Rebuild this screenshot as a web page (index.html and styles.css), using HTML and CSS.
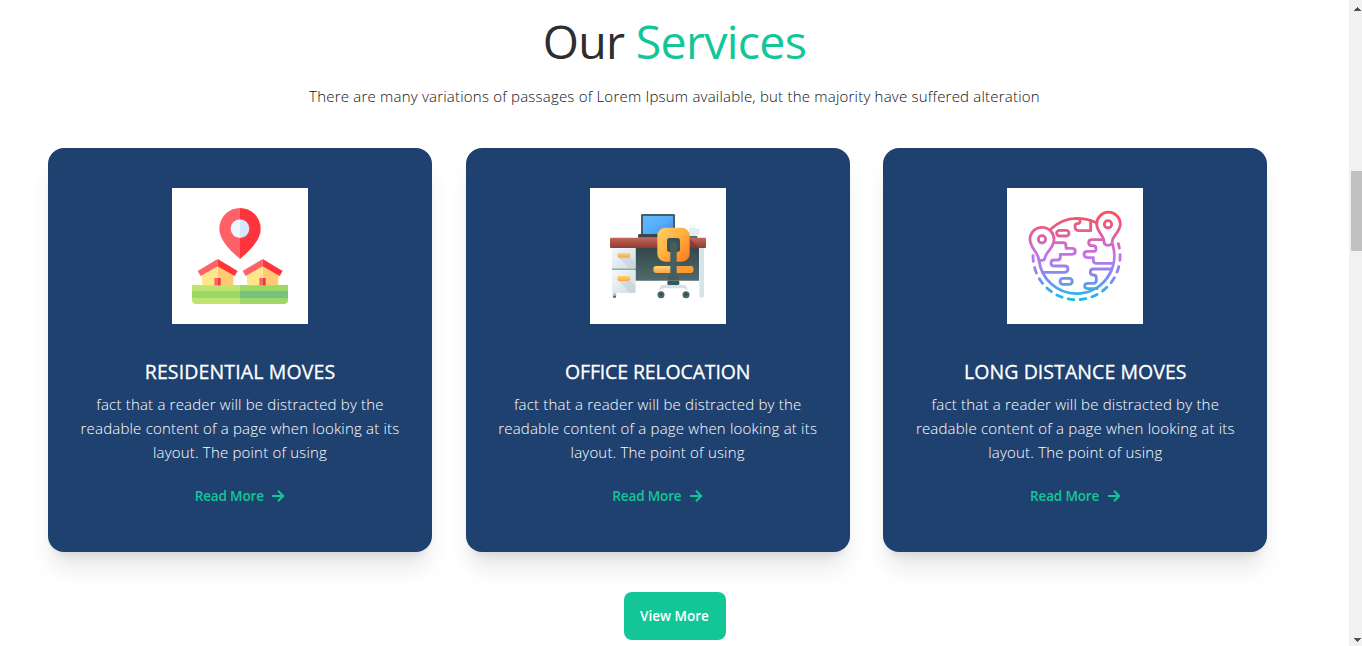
FILE: index.html
```html
<!DOCTYPE html>
<html lang="en">
<head>
<meta charset="utf-8">
<title>Our Services</title>
<link rel="stylesheet" href="styles.css">
</head>
<body>
<div class="window">
<main class="services">
  <h1 class="heading"><span class="heading-a">Our</span> <span class="heading-b">Services</span></h1>
  <p class="intro"><span>There are many variations of passages of Lorem Ipsum available, but the majority have suffered alteration</span></p>
  <section class="cards">
    <article class="card">
      <svg class="picture" viewBox="0 0 408 408">
        <path fill="#ff6169" d="M204 60a62 62 0 0 0-62 62c0 36 36 68 62 91z"/>
        <path fill="#ff333b" d="M204 60a62 62 0 0 1 62 62c0 36-36 68-62 91z"/>
        <path fill="#eef6ff" d="M204 94a28 28 0 0 0 0 56z"/>
        <path fill="#d5e7fc" d="M204 94a28 28 0 0 1 0 56z"/>
        <path fill="#bde570" d="M60 291h144v57H72q-12 0-12-12z"/>
        <path fill="#9bd866" d="M204 291h144v45q0 12-12 12H204z"/>
        <path fill="#9bd866" d="M60 309h144v21H60z"/>
        <path fill="#77c082" d="M204 309h144v21H204z"/>
        <g id="house">
          <path fill="#ffe789" d="M90 255l47-28v65H90z"/>
          <path fill="#ffca72" d="M137 227l47 28v37h-47z"/>
          <path fill="#ff6169" d="M137 213v22l-51 29-9-15z"/>
          <path fill="#ff333b" d="M137 213l60 36-9 15-51-29z"/>
          <path fill="#ff6169" d="M127 270h10v22h-10z"/>
          <path fill="#f0353f" d="M137 270h9v22h-9z"/>
        </g>
        <use href="#house" x="135"/>
      </svg>
      <h2 class="title t1">RESIDENTIAL MOVES</h2>
      <p class="copy">fact that a reader will be distracted by the<br>readable content of a page when looking at its<br>layout. The point of using</p>
      <a class="more"><span class="more-label">Read More</span><svg class="arrow" viewBox="0 0 14 14"><path d="M1 7h11M7 1.8L12.2 7 7 12.2"/></svg></a>
    </article>
    <article class="card">
      <svg class="picture" viewBox="0 0 408 408">
        <defs>
          <linearGradient id="screen" x1="0" y1="0" x2="1" y2="1"><stop stop-color="#62b8ff"/><stop offset=".5" stop-color="#58adfb"/><stop offset="1" stop-color="#3c86dc"/></linearGradient>
          <linearGradient id="panel" x1="0" y1="0" x2="0" y2="1"><stop stop-color="#34484b"/><stop offset="1" stop-color="#506b6d"/></linearGradient>
          <linearGradient id="top" x1="0" y1="0" x2="0" y2="1"><stop stop-color="#c4675c"/><stop offset="1" stop-color="#8f3b30"/></linearGradient>
          <linearGradient id="white" x1="0" y1="0" x2="1" y2="1"><stop stop-color="#f4f8fa"/><stop offset="1" stop-color="#d2dde1"/></linearGradient>
          <linearGradient id="seat" x1="0" y1="0" x2="1" y2="1"><stop stop-color="#ffd069"/><stop offset=".5" stop-color="#ffaf3d"/><stop offset="1" stop-color="#ff741d"/></linearGradient>
          <linearGradient id="bar" x1="0" y1="0" x2="0" y2="1"><stop stop-color="#ffd374"/><stop offset="1" stop-color="#f8a640"/></linearGradient>
        </defs>
        <rect x="153" y="78" width="102" height="66" rx="4" fill="#465f62"/>
        <path fill="url(#screen)" d="M159 84h90v55h-90z"/>
        <path fill="#35494c" d="M148 138h110v11H144v-6q0-5 4-5z"/>
        <path fill="url(#panel)" d="M136 180h191v98H136z"/>
        <path fill="#d5e4e8" d="M328 180h14v143q0 6-7 6t-7-6z"/>
        <path fill="#b4c9ce" d="M68 312h11v13q-5 8-10 0z"/>
        <path fill="#536a6d" d="M69 323h9v6h-9z"/>
        <rect x="66" y="178" width="71" height="65" rx="3" fill="url(#white)"/>
        <rect x="66" y="246" width="71" height="69" rx="4" fill="url(#white)"/>
        <path fill="#637d83" d="M66 242h71v3H66z"/>
        <path fill="#b9c7ce" opacity=".4" d="M84 206h36l16 18v18h-17zM84 276h36l16 18v20h-17z"/>
        <rect x="82" y="195" width="39" height="14" rx="6" fill="url(#bar)"/>
        <rect x="82" y="264" width="39" height="15" rx="6" fill="url(#bar)"/>
        <path fill="none" stroke="#d5e4e8" stroke-width="5" d="M318 126h7q3 12-8 13"/>
        <path fill="#e4eef2" d="M297 120h24v20q-3 6-8 6h-16z"/>
        <path fill="none" stroke="#dde8ec" stroke-width="3" d="M304 120c-5-5 3-6 0-10M314 120c-5-5 3-6 0-10"/>
        <path fill="#526c70" d="M292 144h30v6h-30z"/>
        <rect x="60" y="149" width="288" height="31" rx="3" fill="url(#top)"/>
        <path fill="#79352f" opacity=".65" d="M298 151l29 29h-30z"/>
        <rect x="202" y="119" width="97" height="102" rx="24" fill="url(#seat)"/>
        <rect x="190" y="234" width="120" height="21" rx="9" fill="url(#bar)"/>
        <path fill="#fa9a35" d="M258 234h43q9 0 9 10t-9 11h-43z"/>
        <path fill="#d5e1e5" d="M208 306q0-16 16-16h53q15 0 15 16h-5q0-5-8-5h-56q-9 0-9 5z"/>
        <rect x="231" y="150" width="39" height="42" rx="8" fill="#3a5255"/>
        <rect x="241" y="161" width="19" height="108" rx="7" fill="#445e62"/>
        <rect x="234" y="262" width="33" height="15" rx="3" fill="#435d60"/>
        <rect x="232" y="278" width="36" height="13" rx="4" fill="#3b5558"/>
        <circle cx="213" cy="320" r="10.5" fill="#4b6669"/><circle cx="288" cy="320" r="10.5" fill="#4b6669"/>
        <circle cx="213" cy="319" r="4" fill="#304a4e"/><circle cx="288" cy="319" r="4" fill="#304a4e"/>
      </svg>
      <h2 class="title t2">OFFICE RELOCATION</h2>
      <p class="copy">fact that a reader will be distracted by the<br>readable content of a page when looking at its<br>layout. The point of using</p>
      <a class="more"><span class="more-label">Read More</span><svg class="arrow" viewBox="0 0 14 14"><path d="M1 7h11M7 1.8L12.2 7 7 12.2"/></svg></a>
    </article>
    <article class="card">
      <svg class="picture" viewBox="0 0 408 408">
        <defs><linearGradient id="globe" gradientUnits="userSpaceOnUse" x1="0" y1="70" x2="0" y2="338"><stop stop-color="#fb5058"/><stop offset=".25" stop-color="#e0609a"/><stop offset=".5" stop-color="#bf74f0"/><stop offset=".75" stop-color="#7a90e8"/><stop offset="1" stop-color="#12c0e7"/></linearGradient></defs>
        <g class="lines" stroke="url(#globe)">
          <path d="M132 123A114 114 0 0 1 208 91Q240 91 268 104M96 217A114 114 0 0 0 208 317A114 114 0 0 0 317 170"/>
          <path d="M96 217C94 192 69 181 69 154a36 36 0 0 1 72 0c0 27-22 34-27 55q-2 8-8 8zM303 172c-10 0-12-5-12-12-1-19-22-29-22-52a35 35 0 0 1 71 0c0 23-24 36-24 52 0 7-3 12-13 12z"/>
          <circle cx="105" cy="154" r="11"/><circle cx="303" cy="109" r="11"/>
          <rect x="149" y="127" width="37" height="17" rx="8.5"/>
          <rect x="159" y="271" width="37" height="18" rx="9"/>
          <path d="M219 94v6q0 7-8 7-7 0-7 9 0 12 13 12h34v-29"/>
          <path d="M141 164h27q9 0 9 9v8h18q10 0 10 9t-10 9h-35v8q0 9-9 9h-10q-9 0-9 9t9 9h32q10 0 10 9t-10 10h-66"/>
          <path d="M286 155h-31q-10 0-10 9t10 9h3q9 0 9 9t-9 8h-17q-10 0-10 9t10 10h18v8q0 9 9 9h50"/>
          <path d="M314 243h-55q-9 0-9 9t9 9q9 0 9 9v6q0 10-9 10h-16q-10 0-10 8t10 8h27"/>
          <path class="dashes" d="M78 203A131 131 0 0 0 208 335A131 131 0 0 0 334 167"/>
        </g>
      </svg>
      <h2 class="title t3">LONG DISTANCE MOVES</h2>
      <p class="copy">fact that a reader will be distracted by the<br>readable content of a page when looking at its<br>layout. The point of using</p>
      <a class="more"><span class="more-label">Read More</span><svg class="arrow" viewBox="0 0 14 14"><path d="M1 7h11M7 1.8L12.2 7 7 12.2"/></svg></a>
    </article>
  </section>
  <button class="view">View More</button>
</main>
<aside class="scrollbar">
  <svg class="tri" viewBox="0 0 7 4"><path d="M0 4h7V3H6V2H5V1H4V0H3v1H2v1H1v1H0z"/></svg>
  <div class="thumb"></div>
  <svg class="tri down" viewBox="0 0 7 4"><path d="M0 4h7V3H6V2H5V1H4V0H3v1H2v1H1v1H0z"/></svg>
</aside>
</div>
</body>
</html>
```
FILE: styles.css
```css
* { box-sizing: border-box; }
body { margin: 0; background: #fff; overflow: hidden; font-family: "Open Sans", "Noto Sans", sans-serif; }
h1, h2, p { margin: 0; }
.window { display: flex; height: 646px; }
.services { flex: 1; height: 646px; padding: 11px 48px 0; display: flex; flex-direction: column; align-items: center; }
.heading { height: 60px; line-height: 60px; font-size: 46.5px; font-weight: 400; letter-spacing: -.72px; white-space: nowrap; color: #2e2e2e; }
.heading-b { color: #13c698; }
.intro { margin-top: 13px; height: 24px; line-height: 24px; font-size: 15px; font-weight: 300; letter-spacing: .21px; color: #111; white-space: nowrap; }
.cards { align-self: stretch; margin-top: 40px; display: grid; grid-template-columns: repeat(3, 1fr); }
.card { width: 384px; height: 404px; padding-top: 40px; border-radius: 16px; background: #1f416f; box-shadow: 0 20px 25px -5px rgba(0,0,0,.1), 0 8px 10px -6px rgba(0,0,0,.1); display: flex; flex-direction: column; align-items: center; color: #fff; white-space: nowrap; }
.picture { display: block; width: 136px; height: 136px; background: #fff; }
.title { margin-top: 34px; height: 28px; line-height: 28px; font-size: 19.5px; font-weight: 500; -webkit-text-stroke: .3px #fff; }
.t1 { letter-spacing: .13px; }
.t2 { letter-spacing: -.14px; }
.t3 { letter-spacing: .06px; }
.copy { margin-top: 6px; font-size: 15px; line-height: 24px; font-weight: 300; letter-spacing: .19px; text-align: center; }
.more { margin-top: 20px; height: 24px; display: flex; align-items: center; gap: 8px; color: #13c698; font-size: 13.5px; line-height: 24px; font-weight: 600; letter-spacing: -.15px; }
.arrow { width: 14px; height: 14px; margin-left: -.5px; fill: none; stroke: #13c698; stroke-width: 2; }
.lines { fill: none; stroke-width: 8.5; stroke-linecap: round; stroke-linejoin: round; }
.dashes { stroke-dasharray: 17 19.2; }
.view { margin-top: 40px; width: 102px; height: 48px; flex: none; padding: 0; border: 0; border-radius: 8px; background: #13c698; color: #fff; font: 600 13.5px/24px "Open Sans", "Noto Sans", sans-serif; white-space: nowrap; }
.scrollbar { width: 13px; height: 646px; padding: 7px 0 4px 2px; background: #f1f1f1; display: flex; flex-direction: column; }
.tri { width: 7px; height: 4px; margin-left: 3px; fill: #505050; shape-rendering: crispEdges; }
.down { margin-top: auto; transform: rotate(180deg); }
.thumb { width: 11px; height: 80px; margin-top: 160px; background: #c1c1c1; }
```
